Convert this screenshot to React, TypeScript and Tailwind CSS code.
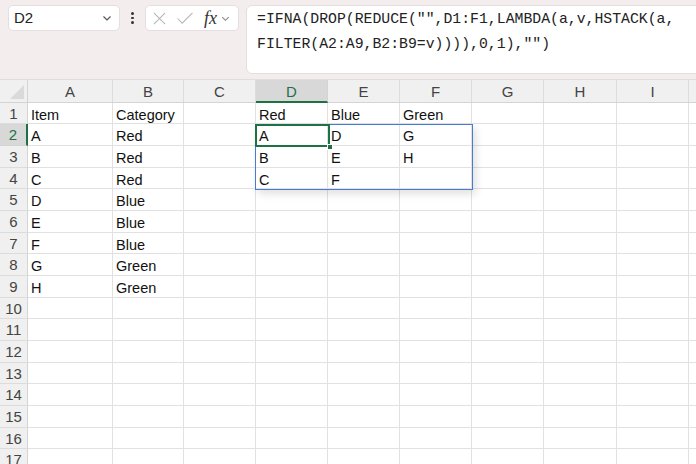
import React from "react";

const cols = [
  { name: "A", w: 85 },
  { name: "B", w: 71 },
  { name: "C", w: 72 },
  { name: "D", w: 72 },
  { name: "E", w: 72 },
  { name: "F", w: 72 },
  { name: "G", w: 72 },
  { name: "H", w: 73 },
  { name: "I", w: 72 },
  { name: "", w: 72 },
];

const rowHeights = [21, 22, 22, 21, 22, 22, 21, 22, 22, 21, 22, 22, 21, 22, 22, 21, 22];

const data: Record<string, string> = {
  A1: "Item", B1: "Category",
  A2: "A", B2: "Red",
  A3: "B", B3: "Red",
  A4: "C", B4: "Red",
  A5: "D", B5: "Blue",
  A6: "E", B6: "Blue",
  A7: "F", B7: "Blue",
  A8: "G", B8: "Green",
  A9: "H", B9: "Green",
  D1: "Red", E1: "Blue", F1: "Green",
  D2: "A", E2: "D", F2: "G",
  D3: "B", E3: "E", F3: "H",
  D4: "C", E4: "F",
};

function Chevron({ className }: { className?: string }) {
  return (
    <svg viewBox="0 0 12 12" className={className} fill="none" stroke="currentColor" strokeWidth="1.2">
      <path d="M2.5 4.5 L6 8 L9.5 4.5" />
    </svg>
  );
}

function TopBar() {
  return (
    <div className="h-[80px] bg-[#f4eded] flex items-start pt-[5px] pl-[8px] border-b border-[#e2dcdc]">
      <div className="shrink-0 w-[112px] h-[26px] bg-white border border-[#e6dede] rounded-[5px] flex items-center justify-between pl-[5px] pr-[6px]">
        <span className="text-[15px] text-[#222] font-['Liberation_Sans',sans-serif]">D2</span>
        <Chevron className="w-[12px] h-[12px] text-[#555]" />
      </div>
      <div className="shrink-0 w-[25px] h-[26px] flex flex-col items-center justify-center gap-[2px]">
        <span className="w-[2.5px] h-[2.5px] bg-[#333] rounded-full" />
        <span className="w-[2.5px] h-[2.5px] bg-[#333] rounded-full" />
        <span className="w-[2.5px] h-[2.5px] bg-[#333] rounded-full" />
      </div>
      <div className="shrink-0 w-[94px] h-[26px] bg-white border border-[#e6dede] rounded-[5px] flex items-center pl-[6px]">
        <svg viewBox="0 0 16 16" className="w-[15px] h-[15px] text-[#b5b5b5]" fill="none" stroke="currentColor" strokeWidth="1.1">
          <path d="M2 2 L14 14 M14 2 L2 14" />
        </svg>
        <svg viewBox="0 0 18 16" className="w-[18px] h-[15px] ml-[9px] text-[#b5b5b5]" fill="none" stroke="currentColor" strokeWidth="1.1">
          <path d="M1 8 L6 13 L17 2" />
        </svg>
        <span className="ml-[10px] text-[18px] italic text-[#333] font-['Liberation_Serif',serif] leading-none">fx</span>
        <Chevron className="w-[11px] h-[11px] ml-[3px] text-[#888]" />
      </div>
      <div className="shrink-0 ml-[7px] w-[470px] h-[69px] bg-white border border-[#e6dede] rounded-l-[6px] pl-[10px] pt-[1px]">
        <div className="font-['Liberation_Mono',monospace] text-[14.8px] leading-[25px] text-[#222] whitespace-pre">
          {'=IFNA(DROP(REDUCE("",D1:F1,LAMBDA(a,v,HSTACK(a,\nFILTER(A2:A9,B2:B9=v)))),0,1),"")'}
        </div>
      </div>
    </div>
  );
}

export default function App() {
  return (
    <div className="w-[696px] h-[464px] overflow-hidden bg-white font-['Liberation_Sans',sans-serif] relative">
      <TopBar />
      <div className="relative">
        {/* column headers */}
        <div className="flex h-[23px] bg-[#f0f0f0] border-b border-[#d4d4d4]">
          <div className="w-[28px] shrink-0 border-r border-[#d4d4d4] relative overflow-hidden">
            <div className="absolute right-[3px] bottom-[3px] w-0 h-0 border-l-[14px] border-l-transparent border-b-[14px] border-b-[#dadada]" />
          </div>
          {cols.map((c, idx) =>
            c.name === "D" ? (
              <div
                key={idx}
                style={{ width: c.w }}
                className="shrink-0 bg-[#d8d8d8] border-r border-[#d4d4d4] border-b-2 border-b-[#1e7145] -mb-px flex items-center justify-center pt-[3px] text-[15px] text-[#1e7145]"
              >
                {c.name}
              </div>
            ) : (
              <div
                key={idx}
                style={{ width: c.w }}
                className="shrink-0 border-r border-[#dcdcdc] flex items-center justify-center pt-[3px] text-[15px] text-[#444]"
              >
                {c.name}
              </div>
            )
          )}
        </div>
        {/* rows */}
        {rowHeights.map((h, i) => {
          const r = i + 1;
          const sel = r === 2;
          return (
            <div key={r} className="flex" style={{ height: h }}>
              <div
                className={
                  sel
                    ? "w-[28px] shrink-0 bg-[#d8d8d8] border-r-2 border-r-[#1e7145] border-b border-[#d4d4d4] flex items-center justify-center pt-[2px] text-[15px] text-[#1e7145]"
                    : "w-[28px] shrink-0 bg-[#f0f0f0] border-r border-[#d4d4d4] border-b border-b-[#dcdcdc] flex items-center justify-center pt-[2px] text-[15px] text-[#444]"
                }
              >
                {r}
              </div>
              {cols.map((c, idx) => (
                <div
                  key={idx}
                  style={{ width: c.w }}
                  className="shrink-0 border-r border-b border-[#e1e1e1] flex items-center pl-[3px] pt-[3px] text-[14.5px] text-[#111] leading-[18px]"
                >
                  {data[c.name + r] ?? ""}
                </div>
              ))}
            </div>
          );
        })}
        {/* spill range */}
        <div className="absolute left-[255px] top-[44px] w-[218px] h-[66px] border-[1.5px] border-[#4a7bd4] shadow-[3px_4px_8px_rgba(0,0,0,0.12)]" />
        {/* active cell */}
        <div className="absolute left-[255px] top-[44px] w-[75px] h-[23px] border-2 border-[#1e7145]" />
        <div className="absolute left-[327px] top-[64px] w-[6px] h-[6px] bg-[#1e7145] border border-white" />
      </div>
    </div>
  );
}
